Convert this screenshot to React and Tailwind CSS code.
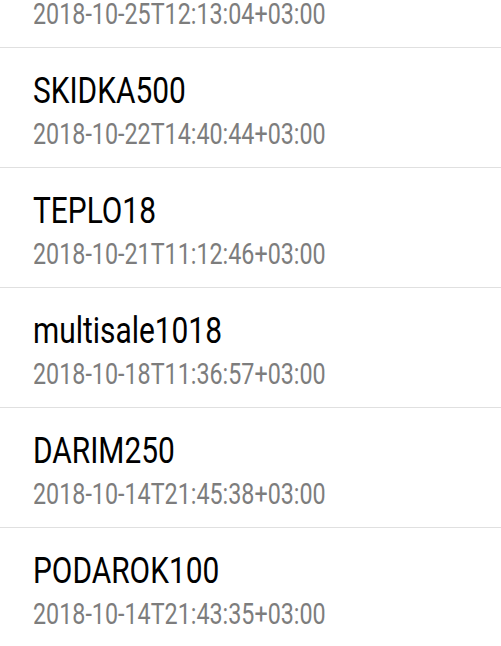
const coupons = [
  { code: 'SKIDKA500', date: '2018-10-22T14:40:44+03:00' },
  { code: 'TEPLO18', date: '2018-10-21T11:12:46+03:00' },
  { code: 'multisale1018', date: '2018-10-18T11:36:57+03:00' },
  { code: 'DARIM250', date: '2018-10-14T21:45:38+03:00' },
  { code: 'PODAROK100', date: '2018-10-14T21:43:35+03:00' },
];

const CouponRow = ({ code, date }) => (
  <div className="h-[120px] border-b border-[#e0e0e0] pl-[33px] pt-[23px]">
    <div className="text-[36px] leading-[40px] text-black origin-left scale-x-[0.83] whitespace-nowrap">
      {code}
    </div>
    <div className="mt-[7px] text-[29.5px] leading-[32px] text-[#7d7d7d] origin-left scale-x-[0.79] whitespace-nowrap">
      {date}
    </div>
  </div>
);

export default function App() {
  return (
    <div className="w-[501px] h-[646px] overflow-hidden bg-white font-['Roboto',sans-serif]">
      {/* list is scrolled, the top item only shows its date */}
      <div className="-mt-[72px]">
        <CouponRow code="BLACKFRIDAY" date="2018-10-25T12:13:04+03:00" />
        {coupons.map(c => (
          <CouponRow key={c.code} code={c.code} date={c.date} />
        ))}
      </div>
    </div>
  );
}
